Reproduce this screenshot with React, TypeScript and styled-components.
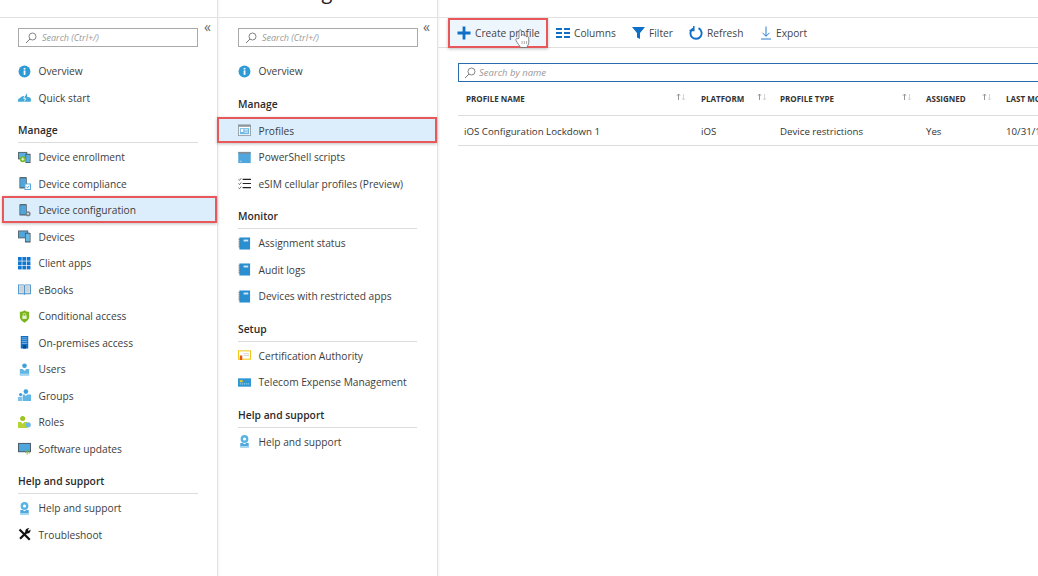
import React from "react";
import styled, { createGlobalStyle } from "styled-components";

const Global = createGlobalStyle`
  html, body { margin: 0; padding: 0; height: 100%; background: #fff; overflow: hidden; }
  body { font-family: "Open Sans", "Liberation Sans", sans-serif; color: #3a3a3a; }
  #root { height: 576px; }
`;

const Page = styled.div`
  position: relative;
  display: flex;
  width: 1038px;
  height: 576px;
  overflow: hidden;
`;

const Blade = styled.aside<{ $w: number }>`
  position: relative;
  flex: 0 0 ${(p) => p.$w}px;
  width: ${(p) => p.$w}px;
  box-sizing: border-box;
  height: 100%;
  border-right: 1px solid #e3e3e3;
  box-shadow: 1px 0 2px rgba(0, 0, 0, 0.05);
`;

const TitleBar = styled.div`
  height: 17px;
  border-bottom: 1px solid #e2e2e2;
  overflow: hidden;
  position: relative;
`;

const CutTitle = styled.span`
  position: absolute;
  left: -9px;
  top: -18px;
  font-size: 20px;
  line-height: 20px;
  white-space: nowrap;
  color: #222;
`;

const SearchRow = styled.div<{ $pad: number }>`
  display: flex;
  padding: 10px 0 0 ${(p) => p.$pad}px;
  height: 39px;
  box-sizing: border-box;
  position: relative;
`;

const SearchBox = styled.div`
  box-sizing: border-box;
  width: 179.5px;
  height: 19px;
  border: 1px solid #a9a9a9;
  display: flex;
  align-items: center;
  padding-left: 6px;
  gap: 5px;
  font-size: 9px;
  font-style: italic;
  color: #999;
`;

const Collapse = styled.span<{ $right: number }>`
  position: absolute;
  right: ${(p) => p.$right}px;
  top: 2px;
  font-size: 14px;
  line-height: 14px;
  color: #666;
`;

const Nav = styled.nav`
  display: flex;
  flex-direction: column;
`;

const Row = styled.div<{ $selected?: boolean; $pad: number; $selLeft: number }>`
  box-sizing: border-box;
  height: 26.5px;
  display: flex;
  align-items: center;
  gap: 7.5px;
  font-size: 10.2px;
  color: #3d3d3d;
  padding: 2px 0 0 ${(p) => p.$pad}px;
  ${(p) =>
    p.$selected &&
    `
    position: relative;
    padding-left: ${p.$pad - p.$selLeft}px;
    margin-left: ${p.$selLeft}px;
    background: #dcedfb;
    outline: 2px solid #e8575a;
    outline-offset: -2px;
    box-shadow: 0 1px 3px rgba(0,0,0,.25);
  `}
`;

const IconSlot = styled.span`
  flex: 0 0 13px;
  width: 13px;
  height: 13px;
  display: flex;
  align-items: center;
  justify-content: center;
  svg { display: block; overflow: visible; }
`;

const Heading = styled.div<{ $rule?: boolean; $pad: number; $end: number }>`
  box-sizing: border-box;
  height: 33px;
  margin: 0 ${(p) => p.$end}px 0 ${(p) => p.$pad}px;
  display: flex;
  align-items: flex-end;
  padding-bottom: 5px;
  font-size: 10.3px;
  font-weight: 600;
  color: #2b2b2b;
  border-bottom: 1px solid ${(p) => (p.$rule === false ? "transparent" : "#dcdcdc")};
`;

const Main = styled.main`
  flex: 1;
  min-width: 0;
  position: relative;
`;

const Toolbar = styled.div`
  height: 30px;
  box-sizing: border-box;
  border-bottom: 1px solid #dfdfdf;
  display: flex;
  align-items: stretch;
  padding-left: 10px;
`;

const ToolButton = styled.div<{ $active?: boolean; $w: number }>`
  box-sizing: border-box;
  width: ${(p) => p.$w}px;
  display: flex;
  align-items: center;
  gap: 4px;
  font-size: 10.2px;
  color: #444;
  padding-left: ${(p) => (p.$active ? 9 : 8)}px;
  ${(p) =>
    p.$active &&
    `
    background: #eef6fd;
    outline: 2px solid #e8575a;
    outline-offset: -2px;
    box-shadow: 0 1px 3px rgba(0,0,0,.25);
    height: 30px;
  `}
`;

const FilterInput = styled.div`
  box-sizing: border-box;
  margin: 15px 0 0 20px;
  width: 640px;
  height: 19px;
  border: 1px solid #2b6cb0;
  display: flex;
  align-items: center;
  gap: 3px;
  padding-left: 5px;
  font-size: 9.5px;
  font-style: italic;
  color: #999;
`;

const Table = styled.div`
  margin-left: 20px;
  width: 760px;
`;

const GridRow = styled.div<{ $h: number }>`
  display: grid;
  grid-template-columns: 243px 79px 146px 80px 212px;
  height: ${(p) => p.$h}px;
  box-sizing: border-box;
  border-bottom: 1px solid #dcdcdc;
  align-items: center;
`;

const HeadCell = styled.div<{ $first?: boolean; $pr: number }>`
  display: flex;
  justify-content: space-between;
  align-items: flex-start;
  font-size: 8px;
  font-weight: 700;
  color: #333;
  white-space: nowrap;
  padding-left: ${(p) => (p.$first ? 8 : 0)}px;
  padding-right: ${(p) => p.$pr}px;
`;

const SortMark = styled.svg`
  width: 10px;
  height: 8px;
`;

const Cell = styled.div<{ $first?: boolean }>`
  font-size: 9.7px;
  font-weight: 500;
  color: #333;
  white-space: nowrap;
  padding-top: 1px;
  padding-left: ${(p) => (p.$first ? 6 : 0)}px;
`;

const Pointer = styled.svg`
  position: absolute;
  left: 76px;
  top: 28px;
  width: 17px;
  height: 21px;
`;

const Sort = () => (
  <SortMark viewBox="0 0 10 8">
    <path d="M2.5 7V1M1 2.6 2.5 1 4 2.6" fill="none" stroke="#8a8a8a" strokeWidth="0.9" />
    <path d="M7.5 1v6M6 5.4 7.5 7 9 5.4" fill="none" stroke="#cfcfcf" strokeWidth="0.9" />
  </SortMark>
);

const Magnifier = () => (
  <svg width="12" height="12" viewBox="0 0 12 12">
    <circle cx="7.5" cy="4.5" r="3.5" fill="none" stroke="#777" strokeWidth="0.9" />
    <path d="M5 7 1 11" stroke="#777" strokeWidth="1" />
  </svg>
);

const S = ({ children }: { children: React.ReactNode }) => (
  <svg width="13" height="13" viewBox="0 0 14 14">{children}</svg>
);

const icons: Record<string, React.ReactNode> = {
  info: (
    <S>
      <circle cx="7" cy="7" r="6.4" fill="#2f9bd6" />
      <rect x="6.1" y="5.8" width="1.9" height="4.8" fill="#fff" />
      <rect x="6.1" y="3.2" width="1.9" height="1.6" fill="#fff" />
    </S>
  ),
  cloud: (
    <S>
      <path d="M0 11.5c-.6-2 .6-3.600 2-3.600C2.800 6 5.500 4.600 7.500 5.600L9.500 2.500l.3 3.700c1.800 0 4.100.9 4.200 3 .1 1-.3 2.300-.6 2.300z" fill="#45a9d8" />
      <path d="M7.600 4 6.200 8h2L7 11" fill="none" stroke="#fff" strokeWidth="0.9" />
    </S>
  ),
  enroll: (
    <S>
      <rect x="0" y="1" width="10" height="8" fill="#59666f" />
      <rect x="1" y="2" width="8" height="6" fill="#57b0e0" />
      <rect x="8" y="3" width="5.500" height="10" rx="0.6" fill="#4a5760" />
      <rect x="8.800" y="4" width="4" height="8" fill="#57b0e0" />
      <circle cx="5.200" cy="8.800" r="3.200" fill="#76b82a" />
      <path d="M3.500 8.800h3.400M5.200 7.100v3.400" stroke="#fff" strokeWidth="0.9" />
    </S>
  ),
  comply: (
    <S>
      <rect x="1.500" y="0" width="8" height="12.500" rx="1" fill="#59666f" />
      <rect x="2.400" y="1.400" width="6.200" height="9.600" fill="#4ea6dc" />
      <rect x="7.500" y="7.500" width="6" height="6" fill="#fff" stroke="#4ea6dc" />
      <path d="M9 10.500l1.200 1.200 2-2.400" fill="none" stroke="#2f8fcc" strokeWidth="0.9" />
    </S>
  ),
  config: (
    <S>
      <rect x="1.500" y="0" width="8" height="12.500" rx="1" fill="#59666f" />
      <rect x="2.400" y="1.400" width="6.200" height="9.600" fill="#4ea6dc" />
      <circle cx="10.800" cy="10.500" r="2.800" fill="#7b858c" />
      <circle cx="10.800" cy="10.500" r="1" fill="#dcedfb" />
    </S>
  ),
  devices: (
    <S>
      <rect x="0" y="0.500" width="11" height="8.500" fill="#59666f" />
      <rect x="1" y="1.500" width="9" height="6.500" fill="#4ea6dc" />
      <rect x="7.500" y="3" width="6" height="10.500" rx="0.7" fill="#4a5760" />
      <rect x="8.300" y="4" width="4.400" height="8.200" fill="#64b8e6" />
    </S>
  ),
  grid: (
    <S>
      {[0, 4.7, 9.4].flatMap((x) =>
        [0, 4.7, 9.4].map((y) => <rect key={`${x}${y}`} x={x} y={y} width="4" height="4" fill="#0f77d0" />)
      )}
    </S>
  ),
  book: (
    <S>
      <path d="M0 1.500h6.500L7 2.500l.5-1H14v10.500H8L7 13l-1-1H0z" fill="#4f97cf" />
      <path d="M1 2.500h5.400v8.500H1zM7.600 2.500H13v8.500H7.600z" fill="#d9dee2" />
      <path d="M2 4.500h3.500M2 6.500h3.500M2 8.500h3.500M8.500 4.500H12M8.500 6.500H12M8.500 8.500H12" stroke="#b5bcc2" strokeWidth="0.7" />
    </S>
  ),
  shield: (
    <S>
      <path d="M7 .2c1.500 1.200 3 1.700 5 1.700v5.300c0 3-2.200 4.800-5 6.500-2.800-1.700-5-3.500-5-6.500V1.900c2 0 3.500-.5 5-1.700z" fill="#7ab51d" />
      <rect x="4.700" y="6" width="4.600" height="3.600" fill="#e8f2d4" />
      <path d="M5.600 6V5a1.400 1.400 0 0 1 2.800 0v1" fill="none" stroke="#e8f2d4" strokeWidth="0.8" />
    </S>
  ),
  server: (
    <S>
      <rect x="3" y="0" width="8" height="13.500" fill="#0f6fc6" />
      <path d="M4 2h6M4 4h6M4 6h6M4 8h6" stroke="#9ccbee" strokeWidth="0.8" />
      <rect x="5.500" y="10" width="3" height="3.500" fill="#08457f" />
    </S>
  ),
  user: (
    <S>
      <circle cx="7" cy="3" r="2.500" fill="#3f9fd8" />
      <path d="M2 6.500h3L7 8.500l2-2h3v7H2z" fill="#62b6e4" />
      <path d="M2 11.500h10v2H2z" fill="#a7d7f0" />
    </S>
  ),
  group: (
    <S>
      <circle cx="8.500" cy="2.800" r="2.500" fill="#3f9fd8" />
      <circle cx="2.800" cy="6" r="1.700" fill="#3f9fd8" />
      <path d="M5 6h2.200l1.300 1.500L9.800 6H14v7H5z" fill="#62b6e4" />
      <path d="M0 8.500h4.500V13H0z" fill="#7cc3ea" />
    </S>
  ),
  role: (
    <S>
      <circle cx="5" cy="2.800" r="2.700" fill="#9ec420" />
      <path d="M0 6.500h3.200L5 8.300l1.800-1.800h3.200V13H0z" fill="#b5d334" />
      <circle cx="11" cy="9.500" r="2.800" fill="#6db8e6" />
    </S>
  ),
  update: (
    <S>
      <rect x="0" y="1" width="14" height="10" fill="#4d5963" />
      <rect x="1" y="2" width="12" height="8" fill="#4ea6dc" />
      <path d="M8 11.500c.4-1.500 1.300-2 2-2M10 13.500c-.4-.6-.4-2.500.6-4M12 8.500v4" fill="none" stroke="#7ab51d" strokeWidth="1" />
    </S>
  ),
  help: (
    <S>
      <circle cx="7" cy="4.300" r="4.200" fill="#59b4e4" />
      <circle cx="7" cy="4.300" r="1.700" fill="#fff" />
      <path d="M2.500 8.500H5L7 10l2-1.500h2.500v5h-9z" fill="#4ea6dc" />
      <path d="M2.500 11.800h9v1.700h-9z" fill="#a7d7f0" />
    </S>
  ),
  tools: (
    <S>
      <path d="M2.500 .8 13.500 11.800 11.800 13.500 .8 2.500z" fill="#111" />
      <path d="M10 3.800 2.200 11.600" stroke="#111" strokeWidth="2.300" />
      <path d="M8 4.500A3.300 3.300 0 0 1 12.300.400l-1.800 1.800.9 1.100 2-1.600a3.300 3.300 0 0 1-3.700 4.100z" fill="#111" />
    </S>
  ),
  profile: (
    <S>
      <rect x="0.500" y="1" width="13" height="11.500" fill="#fff" stroke="#8b959c" strokeWidth="0.9" />
      <rect x="0.500" y="1" width="13" height="2" fill="#8b959c" />
      <rect x="2" y="4.500" width="10" height="6.500" fill="#6db8e6" />
      <rect x="3" y="5.500" width="2.700" height="3" fill="#fff" />
      <path d="M6.800 6h4M6.800 7.500h4M6.800 9h4" stroke="#fff" strokeWidth="0.7" />
    </S>
  ),
  shell: (
    <S>
      <rect x="0.300" y="1" width="13.400" height="12" fill="#4ea6dc" />
      <rect x="0.300" y="1" width="13.400" height="2" fill="#7f8d96" />
      <path d="M2 11h2" stroke="#d5ecf9" strokeWidth="0.8" />
    </S>
  ),
  list: (
    <S>
      <path d="M5 2.500h9M5 7h9M5 11.500h9" stroke="#222" strokeWidth="1.200" />
      <path d="M.5 2.500 1.600 3.600 3.500 1.300M.5 7l1.100 1.100L3.500 5.800M.5 11.500l1.100 1.100 1.900-2.300" fill="none" stroke="#333" strokeWidth="0.8" />
    </S>
  ),
  log: (
    <S>
      <rect x="1.500" y="0.500" width="11.500" height="13" fill="#2a8fd0" />
      <path d="M.5 2.500h2M.5 4.500h2M.5 6.500h2M.5 8.500h2M.5 10.500h2" stroke="#5a6870" strokeWidth="0.8" />
      <rect x="6" y="2.800" width="5" height="2" fill="#cfe8f7" />
    </S>
  ),
  cert: (
    <S>
      <rect x="0.500" y="2" width="13" height="9" fill="#fff" stroke="#f2c811" strokeWidth="1.100" />
      <path d="M6 5h6M6 7h6" stroke="#cfcfcf" strokeWidth="0.9" />
      <rect x="2" y="7" width="2.600" height="4.800" fill="#e8541e" />
    </S>
  ),
  telecom: (
    <S>
      <rect x="0" y="2.500" width="14" height="9" fill="#2f97d4" />
      <rect x="2" y="4.500" width="3" height="2.200" fill="#f2c811" />
      <path d="M2 8.500h10" stroke="#bfe1f4" strokeWidth="0.9" strokeDasharray="1.500 .7" />
    </S>
  ),
};

type Item = { icon: string; label: string; selected?: boolean };
type Section = { title?: string; rule?: boolean; items: Item[] };

const leftNav: Section[] = [
  { items: [{ icon: "info", label: "Overview" }, { icon: "cloud", label: "Quick start" }] },
  {
    title: "Manage",
    items: [
      { icon: "enroll", label: "Device enrollment" },
      { icon: "comply", label: "Device compliance" },
      { icon: "config", label: "Device configuration", selected: true },
      { icon: "devices", label: "Devices" },
      { icon: "grid", label: "Client apps" },
      { icon: "book", label: "eBooks" },
      { icon: "shield", label: "Conditional access" },
      { icon: "server", label: "On-premises access" },
      { icon: "user", label: "Users" },
      { icon: "group", label: "Groups" },
      { icon: "role", label: "Roles" },
      { icon: "update", label: "Software updates" },
    ],
  },
  {
    title: "Help and support",
    items: [{ icon: "help", label: "Help and support" }, { icon: "tools", label: "Troubleshoot" }],
  },
];

const midNav: Section[] = [
  { items: [{ icon: "info", label: "Overview" }] },
  {
    title: "Manage",
    rule: false,
    items: [
      { icon: "profile", label: "Profiles", selected: true },
      { icon: "shell", label: "PowerShell scripts" },
      { icon: "list", label: "eSIM cellular profiles (Preview)" },
    ],
  },
  {
    title: "Monitor",
    items: [
      { icon: "log", label: "Assignment status" },
      { icon: "log", label: "Audit logs" },
      { icon: "log", label: "Devices with restricted apps" },
    ],
  },
  {
    title: "Setup",
    items: [
      { icon: "cert", label: "Certification Authority" },
      { icon: "telecom", label: "Telecom Expense Management" },
    ],
  },
  { title: "Help and support", items: [{ icon: "help", label: "Help and support" }] },
];

const SideNav = ({ sections, pad, end, selLeft }: { sections: Section[]; pad: number; end: number; selLeft: number }) => (
  <Nav>
    {sections.map((s, i) => (
      <React.Fragment key={i}>
        {s.title && (
          <Heading $rule={s.rule} $pad={pad} $end={end}>
            {s.title}
          </Heading>
        )}
        {s.items.map((it) => (
          <Row key={it.label} $selected={it.selected} $pad={pad} $selLeft={selLeft}>
            <IconSlot>{icons[it.icon]}</IconSlot>
            {it.label}
          </Row>
        ))}
      </React.Fragment>
    ))}
  </Nav>
);

const headers: { label: string; pr: number }[] = [
  { label: "PROFILE NAME", pr: 15 },
  { label: "PLATFORM", pr: 13 },
  { label: "PROFILE TYPE", pr: 14 },
  { label: "ASSIGNED", pr: 14 },
  { label: "LAST MODIFIED", pr: 14 },
];

export default function App() {
  return (
    <Page>
      <Global />
      <Blade $w={218}>
        <TitleBar />
        <SearchRow $pad={18}>
          <SearchBox>
            <Magnifier />
            Search (Ctrl+/)
          </SearchBox>
          <Collapse $right={6}>«</Collapse>
        </SearchRow>
        <SideNav sections={leftNav} pad={18} end={19} selLeft={2} />
      </Blade>
      <Blade $w={220}>
        <TitleBar>
          <CutTitle>Device configuration - Profiles</CutTitle>
        </TitleBar>
        <SearchRow $pad={20}>
          <SearchBox>
            <Magnifier />
            Search (Ctrl+/)
          </SearchBox>
          <Collapse $right={7}>«</Collapse>
        </SearchRow>
        <SideNav sections={midNav} pad={20} end={20} selLeft={-1} />
      </Blade>
      <Main>
        <TitleBar />
        <Toolbar>
          <ToolButton $active $w={100}>
            <svg width="14" height="14" viewBox="0 0 14 14">
              <path d="M7 .5v13M.5 7h13" stroke="#0f6fc6" strokeWidth="2.800" />
            </svg>
            Create profile
          </ToolButton>
          <ToolButton $w={76}>
            <svg width="14" height="10" viewBox="0 0 14 10">
              <path d="M0 1h6M8 1h6M0 5h6M8 5h6M0 9h6M8 9h6" stroke="#0f6fc6" strokeWidth="2.200" />
            </svg>
            Columns
          </ToolButton>
          <ToolButton $w={57}>
            <svg width="13" height="12" viewBox="0 0 13 12">
              <path d="M0 0h13L8 6v6L5 10.500V6z" fill="#0f6fc6" />
            </svg>
            Filter
          </ToolButton>
          <ToolButton $w={71}>
            <svg width="14" height="14" viewBox="0 0 14 14">
              <path d="M4 2.500a5.600 5.600 0 1 0 5.500-.3" fill="none" stroke="#0f6fc6" strokeWidth="1.900" />
              <path d="M4.800 0v4.500H.5" fill="none" stroke="#0f6fc6" strokeWidth="1.500" />
            </svg>
            Refresh
          </ToolButton>
          <ToolButton $w={80}>
            <svg width="12" height="14" viewBox="0 0 12 14">
              <path d="M6 .5v9.500M2.500 6.800 6 10.300l3.500-3.500M1 13h10" fill="none" stroke="#0f6fc6" strokeWidth="0.900" />
            </svg>
            Export
          </ToolButton>
        </Toolbar>
        <FilterInput>
          <Magnifier />
          Search by name
        </FilterInput>
        <Table>
          <GridRow $h={34}>
            {headers.map((h, i) => (
              <HeadCell key={h.label} $first={i === 0} $pr={h.pr}>
                {h.label}
                <Sort />
              </HeadCell>
            ))}
          </GridRow>
          <GridRow $h={30}>
            <Cell $first>iOS Configuration Lockdown 1</Cell>
            <Cell>iOS</Cell>
            <Cell>Device restrictions</Cell>
            <Cell>Yes</Cell>
            <Cell>10/31/18, 2:30 PM</Cell>
          </GridRow>
        </Table>
        <Pointer viewBox="0 0 17 21">
          <path
            d="M5 10V3c0-1.700 2.400-1.700 2.400 0v5l.3-1.200c1.600-.5 2.400.2 2.400 1.200.8-.8 2.400-.5 2.400.9.800-.6 2.300-.2 2.300 1.100v4.500c0 2-1.300 3-2 5H6.500c-.5-1.500-3-4-4.500-7-.8-1.700 1-2.600 2-1.500z"
            fill="#fff"
            stroke="#666"
            strokeWidth="0.800"
          />
          <path d="M8 13v3M10.300 13v3M12.600 13v3" stroke="#888" strokeWidth="0.700" />
        </Pointer>
      </Main>
    </Page>
  );
}
